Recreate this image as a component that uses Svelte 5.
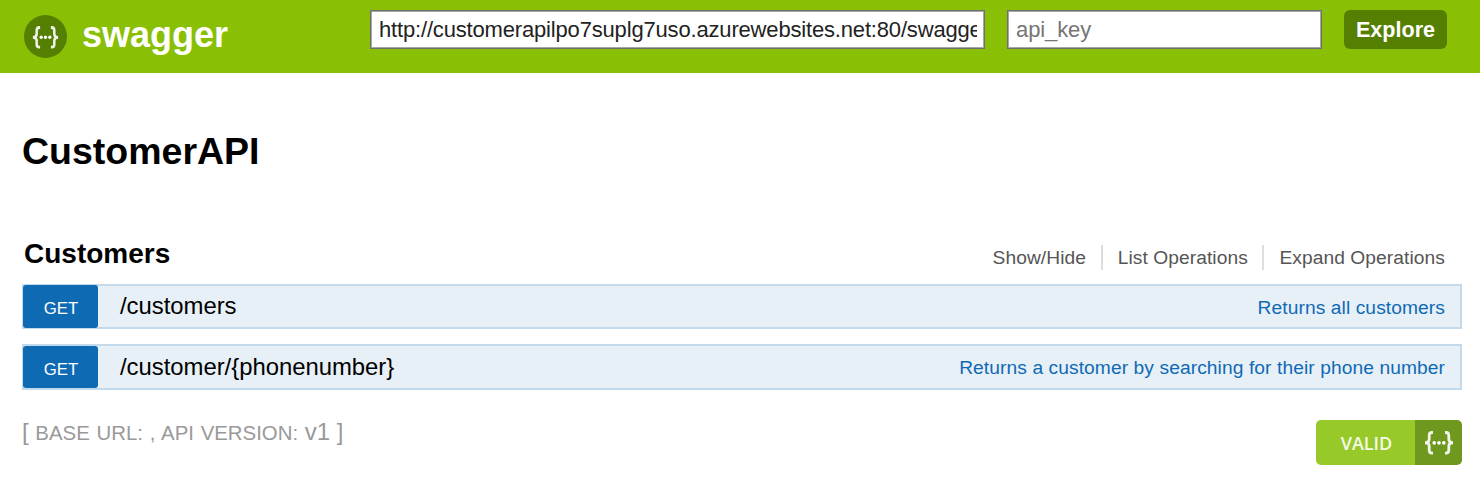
<script>
  const links = ['Show/Hide', 'List Operations', 'Expand Operations'];
  const operations = [
    { method: 'GET', path: '/customers', summary: 'Returns all customers' },
    { method: 'GET', path: '/customer/{phonenumber}', summary: 'Returns a customer by searching for their phone number' }
  ];
  let url = $state('http://customerapilpo7suplg7uso.azurewebsites.net:80/swagger/docs/v1');
  let key = $state('');
</script>

{#snippet braces()}
  <g fill="none" stroke="#fff" stroke-width="2.8" stroke-opacity="0.9">
    <path d="M9 1.5H8C5.8 1.5 5.2 2.6 5.2 4.4V8C5.2 10.2 4.2 11.3 1 11.3C4.2 11.3 5.2 12.4 5.2 14.6V18.2C5.2 20 5.8 21.2 8 21.2H9" />
    <path d="M21 1.5H22C24.2 1.5 24.8 2.6 24.8 4.4V8C24.8 10.2 25.8 11.3 29 11.3C25.8 11.3 24.8 12.4 24.8 14.6V18.2C24.8 20 24.2 21.2 22 21.2H21" />
  </g>
  <g fill="#fff"><circle cx="10.2" cy="11.3" r="1.8" /><circle cx="15" cy="11.3" r="1.8" /><circle cx="19.8" cy="11.3" r="1.8" /></g>
{/snippet}

<header>
  <div class="brand">
    <span class="logo"><svg width="27" height="23" viewBox="0 0 30 23" preserveAspectRatio="none">{@render braces()}</svg></span>
    <span class="name">swagger</span>
  </div>
  <form>
    <input class="url" type="text" bind:value={url} />
    <input class="key" type="text" placeholder="api_key" bind:value={key} />
    <button type="button">Explore</button>
  </form>
</header>

<main>
  <h1>CustomerAPI</h1>
  <section>
    <div class="heading">
      <h2>Customers</h2>
      <ul>
        {#each links as link}<li>{link}</li>{/each}
      </ul>
    </div>
    {#each operations as op}
      <div class="operation">
        <span class="method">{op.method}</span>
        <span class="path">{op.path}</span>
        <span class="summary">{op.summary}</span>
      </div>
    {/each}
  </section>
  <footer>
    <p>[ <small>BASE URL: , API VERSION:</small> v1 ]</p>
    <div class="badge">
      <span class="valid">VALID</span>
      <span class="mark"><svg width="30" height="24" viewBox="0 0 30 23" preserveAspectRatio="none">{@render braces()}</svg></span>
    </div>
  </footer>
</main>

<style>
  :global(body) { background: #fff; font-family: "Liberation Sans", Arial, sans-serif; overflow: hidden; }
  header { box-sizing: border-box; height: 73px; background: #89bf04; display: flex; justify-content: space-between; align-items: flex-start; padding: 10px 33px 0 24px; }
  .brand { display: flex; align-items: flex-start; gap: 15px; padding-top: 5px; }
  .logo { width: 43px; height: 43px; border-radius: 50%; background: #547f00; display: flex; align-items: center; justify-content: center; }
  .logo svg { margin-top: 1px; }
  .name { color: #fff; font-weight: 700; font-size: 36px; line-height: 40px; }
  form { display: flex; gap: 22px; }
  input { box-sizing: border-box; height: 39px; border: 1px solid #6f6f6f; box-shadow: inset 0 0 0 1px #a6a6a6; border-radius: 0; background: #fff; padding: 0 7px 0 8px; color: #222; font: 22px "Liberation Sans", Arial, sans-serif; outline: none; margin: 0; }
  input::placeholder { color: #757575; opacity: 1; }
  .url { width: 615px; letter-spacing: -0.17px; }
  .key { width: 315px; letter-spacing: -0.1px; }
  button { width: 103px; height: 39px; border: 0; border-radius: 6px; background: #547f00; color: #fff; font: 700 21.6px "Liberation Sans", Arial, sans-serif; padding: 0; }
  main { padding: 0 18px 0 22px; }
  h1 { margin: 0; padding-top: 56px; font-size: 37.5px; line-height: 44px; }
  section { padding-top: 60px; }
  .heading { display: flex; justify-content: space-between; height: 51px; padding: 0 17px 0 2px; }
  h2 { margin: 5px 0 0; font-size: 28px; line-height: 32px; }
  ul { display: flex; list-style: none; margin: 12px 0 0; padding: 0; height: 25px; }
  li { color: #555; font-size: 19.2px; letter-spacing: 0.08px; line-height: 25px; padding: 0 15px; border-right: 2px solid #ddd; }
  li:nth-child(2) { padding: 0 14.5px 0 14.6px; }
  li:last-child { padding-right: 0; border: 0; }
  .operation { box-sizing: border-box; height: 45px; margin-bottom: 15px; border: 2px solid #c3d9ec; background: #e7f0f7; display: flex; align-items: center; padding-right: 15px; }
  .operation:last-child { height: 46px; }
  .method { box-sizing: border-box; width: 75px; height: 43px; margin-left: -1px; border-radius: 3px; background: #0f6ab4; color: #fff; font-size: 16.8px; line-height: 47px; padding-left: 1px; text-align: center; }
  .operation:last-child .method { height: 42px; line-height: 47px; }
  .path { margin-left: 22px; padding-bottom: 1px; font-size: 23.9px; letter-spacing: -0.03px; }
  .summary { margin-left: auto; color: #0f6ab4; font-size: 19.2px; letter-spacing: 0.09px; line-height: 22px; padding-top: 2px; }
  .operation:last-child .summary { padding-top: 1px; }
  footer { display: flex; justify-content: space-between; padding-top: 15px; }
  p { margin: -2px 0 0; color: #999; font-size: 24px; line-height: 28px; }
  small { font-size: 20.4px; word-spacing: 1.1px; }
  .badge { display: flex; width: 146px; height: 45px; border-radius: 5px; overflow: hidden; }
  .valid { box-sizing: border-box; width: 99px; padding-left: 2px; background: #97ca28; color: #f5faea; font: 600 18px/46px "Open Sans", sans-serif; text-align: center; }
  .mark { width: 47px; background: #6f991e; display: flex; align-items: center; justify-content: center; }
</style>
